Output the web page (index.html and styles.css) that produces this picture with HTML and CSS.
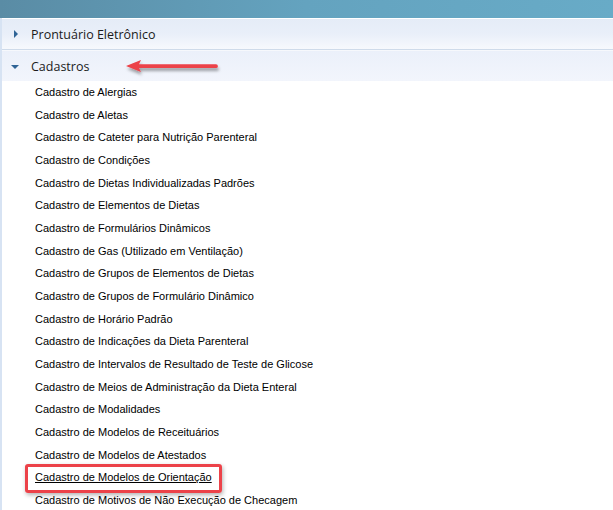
FILE: index.html
```html
<!DOCTYPE html>
<html lang="pt-BR">

<head>
  <meta charset="UTF-8">
  <meta name="viewport" content="width=device-width, initial-scale=1.0">
  <title>Cadastros</title>

  <link rel="stylesheet" href="styles.css">
</head>

<body>
  <div class="topbar"></div>

  <div class="panel">
    <div class="group-header">
      <span class="caret caret-right"></span>
      <span class="group-title">Prontuário Eletrônico</span>
    </div>

    <div class="group-header open">
      <span class="caret caret-down"></span>
      <span class="group-title">Cadastros</span>

      <svg class="callout-arrow" width="110" height="24" viewBox="0 0 110 24">
        <defs>
          <filter id="shadow" x="-10%" y="-40%" width="130%" height="200%">
            <feDropShadow dx="1" dy="3" stdDeviation="1.6" flood-color="#000" flood-opacity="0.35" />
          </filter>
        </defs>
        <g filter="url(#shadow)">
          <path d="M4 10 L19 4 L17 8.3 L94 8.3 A1.9 1.9 0 0 1 94 12.1 L17 12.1 L19 16 Z" fill="#ec4249" />
        </g>
      </svg>
    </div>

    <ul class="items">
      <li>Cadastro de Alergias</li>
      <li>Cadastro de Aletas</li>
      <li>Cadastro de Cateter para Nutrição Parenteral</li>
      <li>Cadastro de Condições</li>
      <li>Cadastro de Dietas Individualizadas Padrões</li>
      <li>Cadastro de Elementos de Dietas</li>
      <li>Cadastro de Formulários Dinâmicos</li>
      <li>Cadastro de Gas (Utilizado em Ventilação)</li>
      <li>Cadastro de Grupos de Elementos de Dietas</li>
      <li>Cadastro de Grupos de Formulário Dinâmico</li>
      <li>Cadastro de Horário Padrão</li>
      <li>Cadastro de Indicações da Dieta Parenteral</li>
      <li>Cadastro de Intervalos de Resultado de Teste de Glicose</li>
      <li>Cadastro de Meios de Administração da Dieta Enteral</li>
      <li>Cadastro de Modalidades</li>
      <li>Cadastro de Modelos de Receituários</li>
      <li>Cadastro de Modelos de Atestados</li>
      <li class="selected"><span class="hover">Cadastro de Modelos de Orientação</span><span class="highlight"></span></li>
      <li>Cadastro de Motivos de Não Execução de Checagem</li>
    </ul>
  </div>
</body>

</html>
```

FILE: styles.css
```css
* {
  padding: 0;
  margin: 0;
  box-sizing: border-box;
}

body {
  background-color: white;
  font-family: 'Liberation Sans', Arial, sans-serif;
  overflow: hidden;
}

.topbar {
  height: 18px;
  background: linear-gradient(to right, #5a8ca5, #64a3bf 50%, #68abc7);
}

.panel {
  border-left: 2px solid #d7e3f3;
  height: 492px;
}

.group-header {
  position: relative;
  display: flex;
  align-items: center;
  height: 32px;
  padding-left: 11px;
  border-top: 1px solid #ffffff;
  border-bottom: 1px solid #cfdbea;
  background: linear-gradient(to bottom, #e5ecf7, #e9eff9 50%, #f7f9fd);
}

.group-header.open {
  height: 31px;
  padding-top: 1px;
  border-top: 1px solid #f6f8fc;
  border-bottom: none;
  background: linear-gradient(to bottom, #ebf0fa, #f2f5fc);
}

.group-title {
  font-family: 'Open Sans', 'Noto Sans', sans-serif;
  font-size: 12.5px;
  color: #1b1b1b;
  margin-left: 11px;
}

.caret {
  display: inline-block;
  width: 7px;
}

.caret-right {
  margin-left: 1px;
  width: 0;
  height: 0;
  border-top: 4px solid transparent;
  border-bottom: 4px solid transparent;
  border-left: 4px solid #2f6496;
  margin-right: 2px;
}

.caret-down {
  margin-left: -2px;
  width: 0;
  height: 0;
  border-left: 4px solid transparent;
  border-right: 4px solid transparent;
  border-top: 4px solid #2f6496;
  margin-right: 1px;
}

.callout-arrow {
  position: absolute;
  left: 120px;
  top: 5px;
}

.items {
  list-style: none;
  padding-left: 33px;
}

.items li {
  position: relative;
  height: 22.67px;
  line-height: 22.67px;
  font-size: 11px;
  color: #000;
}

.items li.selected .hover {
  text-decoration: underline;
}

.highlight {
  position: absolute;
  left: -10px;
  top: -2px;
  width: 197px;
  height: 29px;
  border: 3px solid #ec4249;
  border-radius: 3px;
  box-shadow: 1px 2px 4px rgba(0, 0, 0, 0.3);
}
```
